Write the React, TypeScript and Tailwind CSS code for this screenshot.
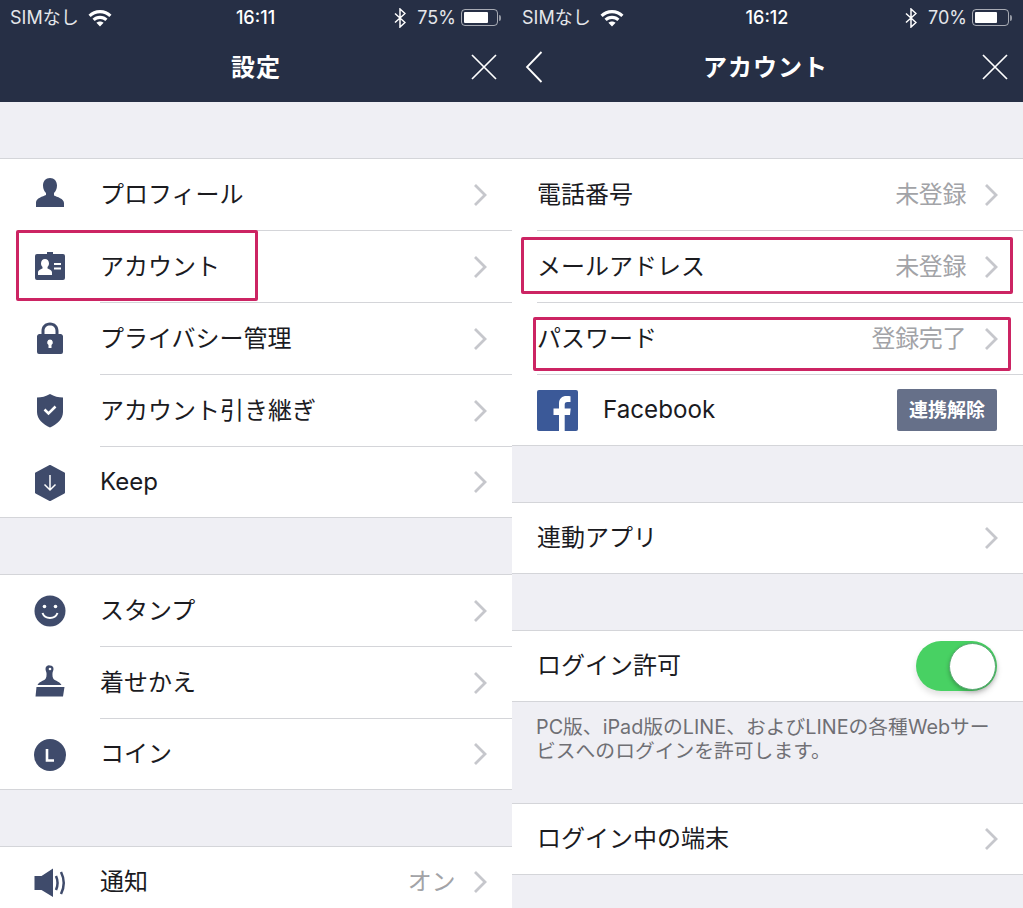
import React from 'react'

const FONT = "font-['Inter','Noto_Sans_CJK_JP',sans-serif]"

const Chevron = () => (
  <svg width="14" height="24" viewBox="0 0 14 24" fill="none" className="shrink-0">
    <path d="M2 2l10 10L2 22" stroke="#c6c7cc" strokeWidth="2.800" />
  </svg>
)

const Wifi = () => (
  <svg width="24" height="18" viewBox="0 0 24 18" fill="#fff">
    <path d="M12 1c4.600 0 8.600 1.800 11.500 4.700l-2.200 2.300C18.900 5.600 15.600 4.200 12 4.200S5.100 5.600 2.700 8L.5 5.700C3.400 2.800 7.400 1 12 1z" />
    <path d="M12 6.800c3 0 5.600 1.200 7.500 3l-2.200 2.300c-1.400-1.300-3.200-2.100-5.300-2.100s-3.900.8-5.300 2.100L4.500 9.800c1.900-1.800 4.500-3 7.500-3z" />
    <path d="M12 12.400c1.500 0 2.800.6 3.600 1.400L12 17.500l-3.600-3.700c.8-.8 2.100-1.400 3.600-1.400z" />
  </svg>
)

const Bluetooth = () => (
  <svg width="12" height="20" viewBox="0 0 12 20" fill="none" stroke="#fff" strokeWidth="1.500">
    <path d="M1 5.500l10 9L6 19V1l5 4.500-10 9" />
  </svg>
)

const Battery = ({ level }: { level: number }) => (
  <div className="flex items-center">
    <div className="h-[17px] w-[37px] rounded-[4px] border border-white/60 p-[2px]">
      <div className="h-full rounded-[1px] bg-white" style={{ width: `${level}%` }} />
    </div>
    <div className="ml-[1px] h-[6px] w-[2px] rounded-r-sm bg-white/50" />
  </div>
)

const CloseIcon = () => (
  <svg width="26" height="26" viewBox="0 0 26 26" stroke="#fff" strokeWidth="1.700">
    <path d="M1 1l24 24M25 1L1 25" />
  </svg>
)

const Header = ({ time, battery, level, title, back }: { time: string; battery: string; level: number; title: string; back?: boolean }) => (
  <div className="h-[102px] shrink-0 bg-[#262f45] text-white">
    <div className="grid h-[34px] grid-cols-[1fr_auto_1fr] items-center pt-[1px] pr-[11px] pl-[10px]">
      <div className="flex items-center gap-[9px]">
        <span className="text-[18px] leading-none text-[#e4e6ea]">SIMなし</span>
        <Wifi />
      </div>
      <span className="text-[18px] leading-none font-medium">{time}</span>
      <div className="flex items-center justify-end">
        <Bluetooth />
        <span className="mr-[5px] ml-[11px] text-[18px] leading-none text-[#e4e6ea]">{battery}</span>
        <Battery level={level} />
      </div>
    </div>
    <div className={`relative flex h-[68px] items-center justify-center ${back ? 'pr-[4px]' : ''}`}>
      {back && (
        <svg width="18" height="32" viewBox="0 0 18 32" fill="none" stroke="#fff" strokeWidth="1.800" className="absolute top-[17px] left-[13px]">
          <path d="M16.500 1L2 16l14.500 15" />
        </svg>
      )}
      <span className="text-[24px] leading-none font-bold tracking-[1px]">{title}</span>
      <div className="absolute top-[20px] right-[15px] leading-none">
        <CloseIcon />
      </div>
    </div>
  </div>
)

const ICON_COLOR = '#3f4b6b'

const ICONS: Record<string, React.ReactNode> = {
  profile: (
    <path d="M20 3c4.200 0 7 3 7 7.500 0 3.500-1.500 6-3 7.500v2.500c3 1.500 10 3 10 7.500V32H6v-4.500c0-4.500 7-6 10-7.500V18c-1.500-1.500-3-4-3-7.500C13 6 15.800 3 20 3z" fill={ICON_COLOR} />
  ),
  account: (
    <>
      <path d="M17 5h6v2h10a2 2 0 0 1 2 2v22a2 2 0 0 1-2 2H7a2 2 0 0 1-2-2V9a2 2 0 0 1 2-2h10z" fill={ICON_COLOR} />
      <path d="M15 12c2.500 0 4 2 4 4.500 0 1.500-.7 2.800-1.500 3.500v1.500c2 1 4.500 1.500 4.500 4V28H8v-2.500c0-2.500 2.500-3 4.500-4V20c-.8-.7-1.500-2-1.500-3.500 0-2.500 1.500-4.500 4-4.500z" fill="#fff" />
      <path d="M24 16h7v2h-7zM24 20.500h7v2h-7z" fill="#fff" />
    </>
  ),
  lock: (
    <>
      <path d="M20 3.500c-5 0-8.500 3.500-8.500 8.500v3H9a3 3 0 0 0-2 2v16a2 2 0 0 0 2 2h22a2 2 0 0 0 2-2V17a3 3 0 0 0-2-2h-2.500v-3c0-5-3.500-8.500-8.500-8.500zM14.500 15v-3c0-3.500 2.200-5.500 5.500-5.500s5.500 2 5.500 5.500v3z" fill={ICON_COLOR} />
      <path d="M20 20.500a3 3 0 0 1 1.500 5.500V29h-3v-3A3 3 0 0 1 20 20.500z" fill="#fff" />
    </>
  ),
  shield: (
    <>
      <path d="M20 3c4 2.500 8.500 3.500 13 3.500V21c0 7-6 12.500-13 15.500C13 33.500 7 28 7 21V6.500C11.500 6.500 16 5.500 20 3z" fill={ICON_COLOR} />
      <path d="M14.500 18.500l4 4 7-7" fill="none" stroke="#fff" strokeWidth="2.500" />
    </>
  ),
  keep: (
    <>
      <path d="M20 3l14 7.500v19L20 37 6 29.500v-19z" fill={ICON_COLOR} stroke={ICON_COLOR} strokeWidth="2" strokeLinejoin="round" />
      <path d="M20 12v15M14.500 21.500L20 27l5.500-5.500" fill="none" stroke="#fff" strokeWidth="1.500" />
    </>
  ),
  smile: (
    <>
      <circle cx="20" cy="20" r="15.500" fill={ICON_COLOR} />
      <circle cx="14.500" cy="15.500" r="1.800" fill="#fff" />
      <circle cx="25.500" cy="15.500" r="1.800" fill="#fff" />
      <path d="M12.500 22c1.500 4 4.500 5 7.500 5s6-1 7.500-5" fill="none" stroke="#fff" strokeWidth="2" />
    </>
  ),
  brush: (
    <>
      <path d="M20 2.500a3.500 3.500 0 0 1 3.500 3.500c0 1.500-.8 2.500-1 4-.2 2.500 0 5 1.500 6.500 2 1.500 6 2.500 7.500 5.500H7.500c1.500-3 5.500-4 7.500-5.500 1.500-1.500 1.700-4 1.500-6.500-.2-1.500-1-2.500-1-4A3.500 3.500 0 0 1 20 2.500z" fill={ICON_COLOR} />
      <path d="M6.500 24h28L33 33.500H5.500z" fill={ICON_COLOR} />
      <circle cx="20" cy="6" r="1.300" fill="#fff" />
    </>
  ),
  coin: (
    <>
      <circle cx="20" cy="20" r="16" fill={ICON_COLOR} />
      <path d="M17 14v11.500h7" fill="none" stroke="#fff" strokeWidth="2.600" />
    </>
  ),
  sound: (
    <>
      <path d="M4.500 13h7L23 5.500v28.500L11.500 27h-7z" fill={ICON_COLOR} />
      <path d="M26 13c2 4.500 2 9.500 0 14M31 9c3.500 7 3.500 15 0 22" fill="none" stroke={ICON_COLOR} strokeWidth="2.500" />
    </>
  ),
}

const Icon = ({ name }: { name: string }) => (
  <svg width="40" height="40" viewBox="0 0 40 40" className="absolute top-[16px] left-[30px]">
    {ICONS[name]}
  </svg>
)

const Row = ({ label, value, icon, divider, box }: { label: string; value?: string; icon?: string; divider?: boolean; box?: React.ReactNode }) => (
  <div className={`relative shrink-0 bg-white ${divider ? 'h-[72px]' : 'h-[70px]'} ${icon ? 'pl-[100px]' : 'pl-[25px]'}`}>
    {icon && <Icon name={icon} />}
    <div className={`flex h-full items-center pr-[25px] ${divider ? 'border-b border-[#d4d5d9]' : ''}`}>
      <span className="flex-1 text-[24px] leading-none text-[#1b1b1f]">{label}</span>
      {value && <span className="mr-[18px] text-[24px] leading-none tracking-[-0.4px] text-[#a2a3a7]">{value}</span>}
      <Chevron />
    </div>
    {box}
  </div>
)

const Section = ({ children }: { children: React.ReactNode }) => (
  <div className="flex flex-col border-y border-[#d4d5d9]">{children}</div>
)

const RedBox = ({ className }: { className: string }) => (
  <div className={`absolute rounded-[2px] border-[3px] border-[#cc2463] ${className}`} />
)

const Settings = () => (
  <div className="flex h-full w-[512px] shrink-0 flex-col bg-[#efeff4]">
    <Header time="16:11" battery="75%" level={78} title="設定" />
    <div className="h-[56px] shrink-0" />
    <Section>
      <Row icon="profile" label="プロフィール" divider />
      <Row icon="account" label="アカウント" divider box={<RedBox className="top-[-1px] left-[16px] h-[71px] w-[242px]" />} />
      <Row icon="lock" label="プライバシー管理" divider />
      <Row icon="shield" label="アカウント引き継ぎ" divider />
      <Row icon="keep" label="Keep" />
    </Section>
    <div className="h-[56px] shrink-0" />
    <Section>
      <Row icon="smile" label="スタンプ" divider />
      <Row icon="brush" label="着せかえ" divider />
      <Row icon="coin" label="コイン" />
    </Section>
    <div className="h-[56px] shrink-0" />
    <div className="border-t border-[#d4d5d9]">
      <Row icon="sound" label="通知" value="オン" />
    </div>
  </div>
)

const Account = () => (
  <div className="flex h-full flex-1 flex-col bg-[#efeff4]">
    <Header time="16:12" battery="70%" level={72} title="アカウント" back />
    <div className="h-[56px] shrink-0" />
    <Section>
      <Row label="電話番号" value="未登録" divider />
      <Row label="メールアドレス" value="未登録" divider box={<RedBox className="top-[6px] left-[9px] h-[57px] w-[492px]" />} />
      <Row label="パスワード" value="登録完了" divider box={<RedBox className="top-[14px] left-[21px] h-[54px] w-[478px]" />} />
      <div className="flex h-[70px] shrink-0 items-center bg-white pr-[26px] pl-[25px]">
        <div className="relative h-[41px] w-[41px] overflow-hidden rounded-[2px] bg-[#3b5998]">
          <svg width="41" height="41" viewBox="0 0 41 41" className="absolute inset-0">
            <path d="M22 41V25h-5.500v-6.500H22v-5c0-5 3-7.500 7.500-7.500 2 0 3.500.1 4 .2V12h-3c-2.300 0-2.800 1.100-2.800 2.800v3.700h6L33 25h-5.300v16z" fill="#fff" />
          </svg>
        </div>
        <span className="ml-[25px] flex-1 text-[24.200px] leading-none text-[#1b1b1f]">Facebook</span>
        <div className="flex h-[42px] w-[100px] items-center justify-center rounded-[2px] bg-[#667089] text-[19px] leading-none font-bold text-white">連携解除</div>
      </div>
    </Section>
    <div className="h-[56px] shrink-0" />
    <Section>
      <Row label="連動アプリ" />
    </Section>
    <div className="h-[56px] shrink-0" />
    <Section>
      <div className="flex h-[70px] shrink-0 items-center justify-between bg-white pr-[26px] pl-[25px]">
        <span className="text-[24px] leading-none text-[#1b1b1f]">ログイン許可</span>
        <div className="flex h-[50px] w-[81px] items-center justify-end rounded-full bg-[#48d163] pr-[1px] shadow-[0_4px_6px_rgba(0,0,0,0.12)]">
          <div className="h-[47px] w-[47px] rounded-full border border-[#5aa873] bg-white shadow-[0_2px_4px_rgba(0,0,0,0.25)]" />
        </div>
      </div>
    </Section>
    <p className="h-[101px] shrink-0 pt-[13px] pl-[24px] text-[19.800px] leading-[24px] text-[#6f6f74]">
      PC版、iPad版のLINE、およびLINEの各種Webサー
      <br />
      ビスへのログインを許可します。
    </p>
    <Section>
      <Row label="ログイン中の端末" />
    </Section>
  </div>
)

export default function App() {
  return (
    <div className={`flex h-[908px] w-[1023px] overflow-hidden ${FONT}`}>
      <Settings />
      <Account />
    </div>
  )
}
